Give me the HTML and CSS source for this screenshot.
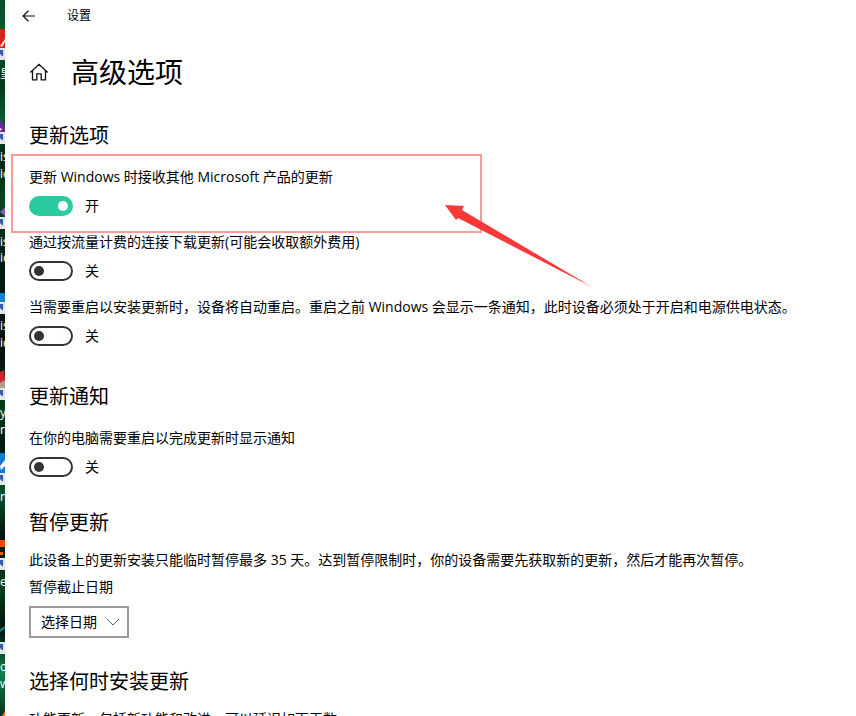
FILE: index.html
```html
<!DOCTYPE html>
<html lang="zh-CN">
<head>
<meta charset="utf-8">
<meta name="viewport" content="width=device-width, initial-scale=1">
<title>设置</title>
<link rel="stylesheet" href="styles.css">
</head>
<body>
<div class="screen">
  <svg class="desktop" viewBox="0 0 5 716" preserveAspectRatio="xMinYMin slice" aria-hidden="true">
    <defs>
      <linearGradient id="wall" x1="0" y1="0" x2="0" y2="1">
        <stop offset="0" stop-color="#0a4d27"/>
        <stop offset="0.04" stop-color="#075c2c"/>
        <stop offset="0.12" stop-color="#03391b"/>
        <stop offset="0.17" stop-color="#0a5c38"/>
        <stop offset="0.22" stop-color="#04210f"/>
        <stop offset="0.28" stop-color="#06481f"/>
        <stop offset="0.36" stop-color="#021c12"/>
        <stop offset="0.5" stop-color="#03140c"/>
        <stop offset="0.57" stop-color="#053d16"/>
        <stop offset="0.62" stop-color="#02180d"/>
        <stop offset="0.69" stop-color="#06502a"/>
        <stop offset="0.75" stop-color="#04140b"/>
        <stop offset="0.82" stop-color="#06401d"/>
        <stop offset="0.88" stop-color="#03120b"/>
        <stop offset="0.94" stop-color="#118048"/>
        <stop offset="1" stop-color="#053617"/>
      </linearGradient>
      <g id="shortcut">
        <rect width="5" height="12" fill="#e4e4e8"/>
        <path d="M0 2h3v6H2L0 6z" fill="#2f5fa5"/>
      </g>
    </defs>
    <rect width="5" height="716" fill="url(#wall)"/>
    <rect y="29" width="5" height="20" fill="#d7221d"/>
    <path d="M0 46L5 39V42L2 47z" fill="#eee"/>
    <path d="M0 120L5 127V132H0z" fill="#6d2b91"/>
    <path d="M0 128l2 1-2 2z" fill="#fff"/>
    <path d="M5 207L0 212L5 216z" fill="#8755bd"/>
    <path d="M0 293h5v10H0z" fill="#0f83d0"/>
    <path d="M0 372l4-2 1 10-5 5z" fill="#cf2630"/>
    <path d="M0 383l5-3v9H0z" fill="#aaa28e"/>
    <rect y="453" width="5" height="20" fill="#147bd1"/>
    <path d="M0 466l5-6v6l-4 4z" fill="#fff"/>
    <rect y="540" width="5" height="7" fill="#f04a08"/>
    <rect y="552" width="3" height="3" fill="#ff5812"/>
    <path d="M0 631l5-4" stroke="#1688a6" stroke-width="2"/>
    <path d="M2 716l3-5v5z" fill="#ec7a20"/>
    <use href="#shortcut" y="48"/>
    <use href="#shortcut" y="132"/>
    <use href="#shortcut" y="217"/>
    <use href="#shortcut" y="302"/>
    <use href="#shortcut" y="388"/>
    <use href="#shortcut" y="473"/>
    <use href="#shortcut" y="558"/>
    <use href="#shortcut" y="642"/>
  </svg>
  <div class="icon-names" aria-hidden="true">
    <span style="top:66px">皇</span>
    <span style="top:149px">is</span>
    <span style="top:166px">ic</span>
    <span style="top:234px">is</span>
    <span style="top:250px">ic</span>
    <span style="top:318px">is</span>
    <span style="top:335px">ic</span>
    <span style="top:405px">y</span>
    <span style="top:422px">n</span>
    <span style="top:489px">n</span>
    <span style="top:574px">e</span>
    <span style="top:659px">o</span>
    <span style="top:676px">w</span>
  </div>

  <div class="window">
    <header class="titlebar">
      <button class="back" type="button" aria-label="返回">
        <svg viewBox="0 0 14 12" width="14" height="12" fill="none" stroke="#111" stroke-width="1.200"><path d="M6.500 .7L1 6l5.500 5.300M1 6h12"/></svg>
      </button>
      <span class="app-name">设置</span>
    </header>

    <div class="page-title">
      <a class="home" href="#" aria-label="主页">
        <svg viewBox="0 0 20 20" width="20" height="20" fill="none" stroke="#111" stroke-width="1.300"><path d="M1.300 10.500L10 2.300l8.700 8.200M3.500 8.700v9.100h4.300v-6h4.400v6h4.300V8.700"/></svg>
      </a>
      <h1>高级选项</h1>
    </div>

    <main>
      <section class="toggles">
        <h2>更新选项</h2>
        <div class="setting">
          <label for="ms-products">更新 Windows 时接收其他 Microsoft 产品的更新</label>
          <div class="control"><input class="switch" type="checkbox" role="switch" id="ms-products" checked><span>开</span></div>
          <svg class="mark" viewBox="0 0 582 136" width="582" height="136" aria-hidden="true">
            <rect x="2" y="2" width="469" height="77" fill="none" stroke="#ff9999" stroke-width="2"/>
            <path d="M435 52L454 53L452 57L582 134L448 65L446 67z" fill="#fb3838"/>
          </svg>
        </div>
        <div class="setting">
          <label for="metered">通过按流量计费的连接下载更新(可能会收取额外费用)</label>
          <div class="control"><input class="switch" type="checkbox" role="switch" id="metered"><span>关</span></div>
        </div>
        <div class="setting">
          <label for="restart">当需要重启以安装更新时，设备将自动重启。重启之前 Windows 会显示一条通知，此时设备必须处于开启和电源供电状态。</label>
          <div class="control"><input class="switch" type="checkbox" role="switch" id="restart"><span>关</span></div>
        </div>
      </section>

      <section class="toggles">
        <h2>更新通知</h2>
        <div class="setting">
          <label for="notify">在你的电脑需要重启以完成更新时显示通知</label>
          <div class="control"><input class="switch" type="checkbox" role="switch" id="notify"><span>关</span></div>
        </div>
      </section>

      <section>
        <h2>暂停更新</h2>
        <p>此设备上的更新安装只能临时暂停最多 35 天。达到暂停限制时，你的设备需要先获取新的更新，然后才能再次暂停。</p>
        <label class="date-label" for="pause-date">暂停截止日期</label>
        <div class="picker">
          <select id="pause-date"><option>选择日期</option></select>
          <svg viewBox="0 0 14 8" width="14" height="8" fill="none" stroke="#666" aria-hidden="true"><path d="M1 1l6 6 6-6"/></svg>
        </div>
      </section>

      <section>
        <h2>选择何时安装更新</h2>
        <p>功能更新，包括新功能和改进，可以延迟如下天数</p>
      </section>
    </main>
  </div>
</div>
</body>
</html>
```
FILE: styles.css
```css
* {
  box-sizing: border-box;
}

body {
  margin: 0;
  background: #fff;
  color: #000;
  font: 14px/20px "Open Sans", "Noto Sans CJK SC", sans-serif;
}

.screen {
  position: relative;
  display: flex;
  height: 100vh;
  overflow: hidden;
}

.desktop {
  flex: none;
  width: 5px;
  height: 100%;
  background: #053617;
}

/* Captions of the desktop icons, mostly hidden behind the window */
.icon-names {
  position: absolute;
  top: 0;
  left: 0;
  width: 5px;
  height: 100%;
  overflow: hidden;
  color: #fff;
  font-size: 12px;
  line-height: 16px;
}

.icon-names span {
  position: absolute;
  left: 0;
}

.window {
  flex: 1;
  min-width: 0;
  padding-left: 16px;
}

.titlebar {
  display: flex;
  align-items: center;
  gap: 30px;
  height: 32px;
  font-size: 12px;
}

.back {
  display: grid;
  place-items: center;
  width: 16px;
  height: 24px;
  padding: 0;
  border: 0;
  background: none;
}

.page-title {
  display: flex;
  align-items: center;
  gap: 22px;
  height: 80px;
  padding-left: 8px;
}

.home {
  display: flex;
}

h1,
h2,
p {
  margin: 0;
  font-weight: 400;
}

h1 {
  font-size: 28px;
  line-height: 40px;
}

h2 {
  margin-bottom: 13px;
  font-size: 20px;
  line-height: 28px;
}

main {
  padding: 10px 8px 0;
}

section {
  margin-bottom: 30px;
}

.toggles {
  margin-bottom: 32px;
}

.toggles h2 {
  margin-bottom: 17px;
}

.toggles:first-child {
  margin-bottom: 37px;
}

.setting {
  position: relative;
  margin-bottom: 16px;
}

.setting:last-child {
  margin-bottom: 0;
}

.setting label,
.date-label {
  display: block;
}

.control {
  display: flex;
  align-items: center;
  gap: 12px;
  height: 20px;
  margin-top: 9px;
}

.switch {
  appearance: none;
  display: flex;
  align-items: center;
  width: 44px;
  height: 20px;
  margin: 0;
  padding: 0 3px;
  border: 2px solid #333;
  border-radius: 10px;
}

.switch::before {
  content: "";
  width: 10px;
  height: 10px;
  border-radius: 50%;
  background: #333;
}

.switch:checked {
  justify-content: flex-end;
  border-color: #2acba0;
  background: #2acba0;
}

.switch:checked::before {
  background: #fff;
}

.mark {
  position: absolute;
  top: -14px;
  left: -19px;
  pointer-events: none;
}

.date-label {
  margin-top: 7px;
}

.picker {
  position: relative;
  width: 100px;
  margin-top: 9px;
}

.picker select {
  appearance: none;
  display: block;
  width: 100%;
  height: 32px;
  padding: 0 10px;
  border: 2px solid #999;
  border-radius: 0;
  background: #fff;
  color: #000;
  font: inherit;
}

.picker svg {
  position: absolute;
  top: 12px;
  right: 9px;
  pointer-events: none;
}
```
